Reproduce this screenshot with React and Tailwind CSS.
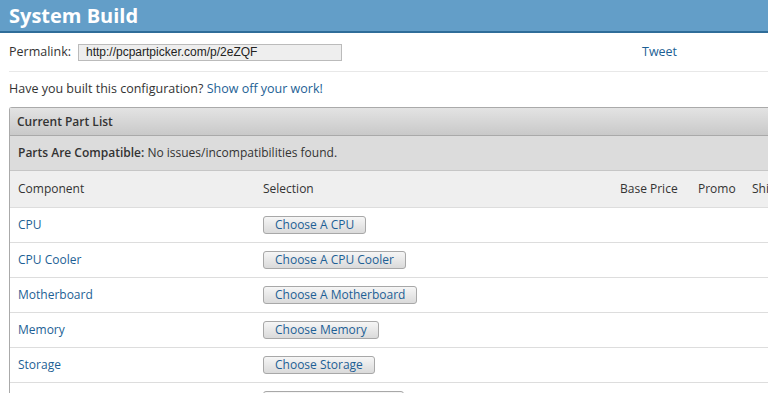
import React from 'react';

const parts = [
  { name: 'CPU', btn: 'Choose A CPU' },
  { name: 'CPU Cooler', btn: 'Choose A CPU Cooler' },
  { name: 'Motherboard', btn: 'Choose A Motherboard' },
  { name: 'Memory', btn: 'Choose Memory' },
  { name: 'Storage', btn: 'Choose Storage' },
  { name: 'Video Card', btn: 'Choose A Video Card' },
];

const App = () => {
  return (
    <div className="w-[768px] h-[393px] overflow-hidden bg-white text-[12px] text-[#333] font-['Open_Sans',sans-serif]">
      {/* header */}
      <div className="h-[33px] bg-[#639ec8] border-b-2 border-[#2f6d99] px-[9px] flex items-center">
        <h1 className="text-white font-bold text-[20px] leading-none">System Build</h1>
      </div>

      {/* permalink */}
      <div className="ml-[9px] h-[39px] border-b border-[#e8e8e8] flex items-center">
        <span className="w-[69px] text-[12.5px]">Permalink:</span>
        <input
          readOnly
          value="http://pcpartpicker.com/p/2eZQF"
          className="w-[264px] h-[17px] bg-[#eee] border border-[#bbb] px-[7px] text-[12px] text-[#222] font-['Liberation_Sans',sans-serif] outline-none"
        />
        <a className="ml-[300px] text-[12.5px] text-[#1d5f95]">Tweet</a>
      </div>

      <p className="ml-[9px] h-[35px] flex items-center text-[12.5px]">
        Have you built this configuration?&nbsp;<a className="text-[#1d5f95]">Show off your work!</a>
      </p>

      {/* part list */}
      <div className="ml-[9px] border-l border-t border-[#aaa] rounded-tl-[3px]">
        <div className="h-[28px] px-[7px] flex items-center bg-gradient-to-b from-[#e3e3e3] to-[#c9c9c9] border-b border-[#a9a9a9] font-semibold">
          Current Part List
        </div>
        <div className="h-[35px] px-[8px] flex items-center bg-[#dcdcdc] border-b border-[#c6c6c6]">
          <span className="font-semibold">Parts Are Compatible:</span>&nbsp;No issues/incompatibilities found.
        </div>
        <table className="w-[820px] table-fixed border-collapse text-left">
          <thead>
            <tr className="h-[36px] bg-[#efefef] border-b border-[#ddd]">
              <th className="w-[253px] pl-[8px] font-normal">Component</th>
              <th className="w-[357px] font-normal">Selection</th>
              <th className="w-[78px] font-normal">Base Price</th>
              <th className="w-[54px] font-normal">Promo</th>
              <th className="font-normal whitespace-nowrap">Shipping</th>
            </tr>
          </thead>
          <tbody>
            {parts.map(p => (
              <tr key={p.name} className="h-[35px] border-b border-[#ddd]">
                <td className="pl-[8px]">
                  <a className="text-[#1d5f95]">{p.name}</a>
                </td>
                <td>
                  <button className="h-[18px] px-[11px] rounded-[3px] border border-[#a8a8a8] bg-gradient-to-b from-[#f6f6f6] to-[#dadada] text-[#1d5f95] leading-none whitespace-nowrap">
                    {p.btn}
                  </button>
                </td>
                <td></td>
                <td></td>
                <td></td>
              </tr>
            ))}
          </tbody>
        </table>
      </div>
    </div>
  );
};

export default App;
